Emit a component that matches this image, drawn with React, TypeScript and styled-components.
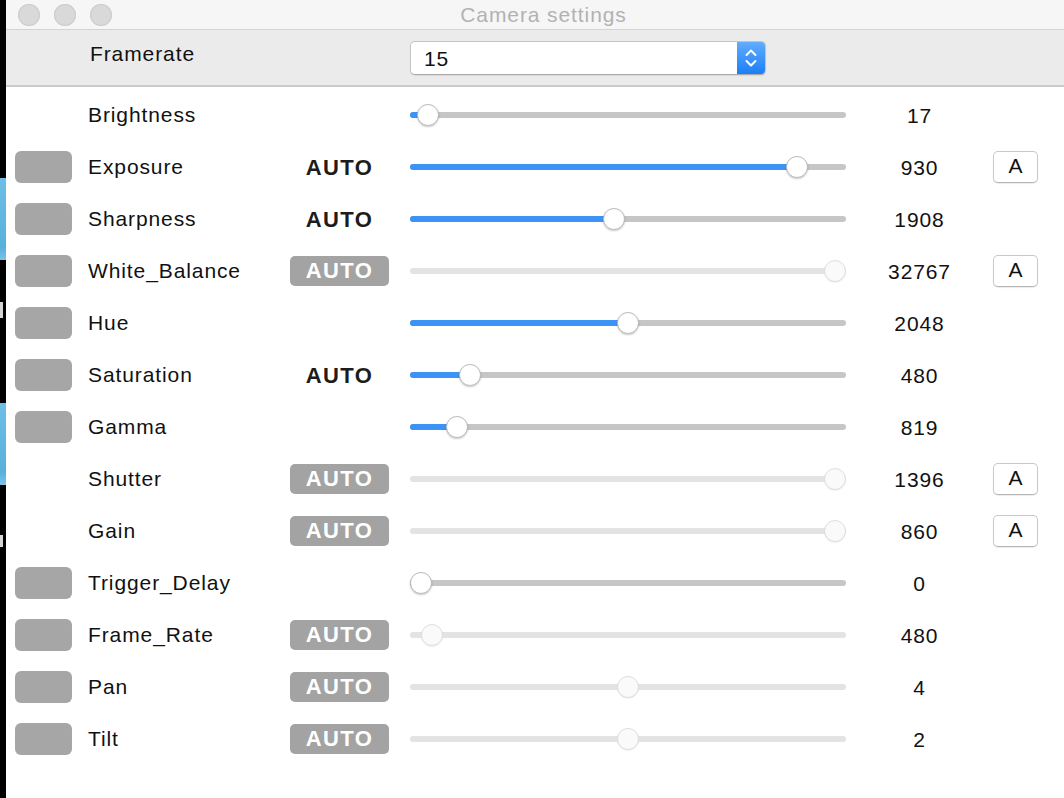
import React from 'react';
import styled, { createGlobalStyle } from 'styled-components';

const GlobalStyle = createGlobalStyle`
  html, body {
    margin: 0;
    padding: 0;
    background: #000;
  }
  body {
    font-family: 'Liberation Sans', Arial, sans-serif;
    -webkit-font-smoothing: antialiased;
  }
`;

type Control = {
  name: string;
  toggle: boolean;
  auto: 'none' | 'text' | 'badge';
  enabled: boolean;
  position: number;
  value: number;
  autoButton: boolean;
};

const controls: Control[] = [
  { name: 'Brightness', toggle: false, auto: 'none', enabled: true, position: 0.017, value: 17, autoButton: false },
  { name: 'Exposure', toggle: true, auto: 'text', enabled: true, position: 0.908, value: 930, autoButton: true },
  { name: 'Sharpness', toggle: true, auto: 'text', enabled: true, position: 0.466, value: 1908, autoButton: false },
  { name: 'White_Balance', toggle: true, auto: 'badge', enabled: false, position: 1, value: 32767, autoButton: true },
  { name: 'Hue', toggle: true, auto: 'none', enabled: true, position: 0.5, value: 2048, autoButton: false },
  { name: 'Saturation', toggle: true, auto: 'text', enabled: true, position: 0.118, value: 480, autoButton: false },
  { name: 'Gamma', toggle: true, auto: 'none', enabled: true, position: 0.087, value: 819, autoButton: false },
  { name: 'Shutter', toggle: false, auto: 'badge', enabled: false, position: 1, value: 1396, autoButton: true },
  { name: 'Gain', toggle: false, auto: 'badge', enabled: false, position: 1, value: 860, autoButton: true },
  { name: 'Trigger_Delay', toggle: true, auto: 'none', enabled: true, position: 0, value: 0, autoButton: false },
  { name: 'Frame_Rate', toggle: true, auto: 'badge', enabled: false, position: 0.027, value: 480, autoButton: false },
  { name: 'Pan', toggle: true, auto: 'badge', enabled: false, position: 0.5, value: 4, autoButton: false },
  { name: 'Tilt', toggle: true, auto: 'badge', enabled: false, position: 0.5, value: 2, autoButton: false }
];

const Screen = styled.div`
  display: flex;
  width: 1064px;
  height: 798px;
  overflow: hidden;
  background: #000;
`;

// sliver of the desktop showing left of the window
const Desktop = styled.div`
  width: 6px;
  flex-shrink: 0;
  display: flex;
  flex-direction: column;
  overflow: hidden;
  background: #000;
`;

const DesktopTile = styled.div<{ $top: number; $height: number }>`
  margin-top: ${({ $top }) => $top}px;
  height: ${({ $height }) => $height}px;
  background: linear-gradient(#6dbfe6, #58b0dc 85%, #7cc4e8);
`;

const DesktopMark = styled.div<{ $top: number; $height: number }>`
  margin-top: ${({ $top }) => $top}px;
  width: 3px;
  height: ${({ $height }) => $height}px;
  background: #d4d4d4;
`;

const Window = styled.div`
  flex: 1;
  display: flex;
  flex-direction: column;
  background: #fff;
`;

const TitleBar = styled.div`
  height: 29px;
  display: flex;
  align-items: center;
  padding-left: 12px;
  background: #f6f6f6;
  border-bottom: 1px solid #d4d4d4;
`;

const Lights = styled.div`
  display: flex;
  gap: 14px;
`;

const Light = styled.div`
  width: 22px;
  height: 22px;
  border-radius: 50%;
  background: #d9d9d9;
  box-shadow: inset 0 0 0 1px #cdcdcd;
`;

const Title = styled.div`
  flex: 1;
  padding-right: 89px;
  text-align: center;
  color: #b2b2b2;
  font-size: 21px;
  letter-spacing: 0.9px;
  line-height: 28px;
`;

const Toolbar = styled.div`
  height: 55px;
  display: flex;
  align-items: center;
  padding-left: 84px;
  background: #ebebeb;
  border-bottom: 2px solid #cbcbcb;
`;

const ToolbarLabel = styled.div`
  width: 320px;
  font-size: 21px;
  letter-spacing: 0.9px;
  color: #111;
  margin-top: -7px;
`;

const Select = styled.div`
  width: 356px;
  height: 34px;
  box-sizing: border-box;
  display: flex;
  align-items: stretch;
  background: #fff;
  border: 1px solid #c4c4c4;
  border-bottom-color: #a9a9a9;
  border-radius: 5px;
  box-shadow: 0 1px 1px rgba(0, 0, 0, 0.08);
  overflow: hidden;
`;

const SelectValue = styled.div`
  flex: 1;
  padding-left: 13px;
  font-size: 21px;
  letter-spacing: 0.9px;
  line-height: 34px;
  color: #111;
`;

const Stepper = styled.div`
  width: 28px;
  display: flex;
  align-items: center;
  justify-content: center;
  background: linear-gradient(#62acfb, #1b7ff8);
`;

const Rows = styled.div`
  padding-top: 2px;
  display: flex;
  flex-direction: column;
`;

const Row = styled.div`
  height: 52px;
  display: grid;
  grid-template-columns: 57px 218px 99px 457px 147px 45px;
  align-items: center;
  padding-left: 9px;
`;

const Toggle = styled.div<{ $visible: boolean }>`
  width: 57px;
  height: 32px;
  border-radius: 6px;
  background: ${({ $visible }) => ($visible ? '#a6a6a6' : 'transparent')};
`;

const Label = styled.div`
  padding-left: 16px;
  font-size: 21px;
  letter-spacing: 0.9px;
  color: #111;
  margin-top: -1px;
`;

const AutoText = styled.div`
  text-align: center;
  font-size: 22px;
  font-weight: 700;
  letter-spacing: 1.4px;
  color: #1c1c1c;
  margin-top: 1px;
`;

const AutoBadge = styled.div`
  height: 30px;
  border-radius: 5px;
  background: #a3a3a3;
  color: #fff;
  font-size: 22px;
  font-weight: 700;
  letter-spacing: 1.4px;
  line-height: 30px;
  text-align: center;
`;

const SliderWrap = styled.div`
  padding-left: 21px;
`;

const Track = styled.div<{ $enabled: boolean }>`
  position: relative;
  width: 436px;
  height: 6px;
  border-radius: 3px;
  background: ${({ $enabled }) => ($enabled ? '#c6c6c6' : '#e3e3e3')};
`;

const Fill = styled.div`
  position: absolute;
  left: 0;
  top: 0;
  height: 6px;
  border-radius: 3px;
  background: #3d93f5;
`;

const Thumb = styled.div<{ $enabled: boolean }>`
  position: absolute;
  top: -8px;
  width: 22px;
  height: 22px;
  box-sizing: border-box;
  border-radius: 50%;
  background: ${({ $enabled }) => ($enabled ? '#fff' : '#fafafa')};
  border: 1px solid ${({ $enabled }) => ($enabled ? '#bdbdbd' : '#dedede')};
  box-shadow: ${({ $enabled }) =>
    $enabled ? '0 1px 2px rgba(0, 0, 0, 0.22)' : '0 1px 1px rgba(0, 0, 0, 0.06)'};
`;

const Value = styled.div`
  text-align: center;
  font-size: 21px;
  letter-spacing: 0.9px;
  color: #111;
  margin-top: 1px;
`;

const AutoButton = styled.div`
  width: 45px;
  height: 32px;
  box-sizing: border-box;
  border: 1px solid #c9c9c9;
  border-bottom-color: #b5b5b5;
  border-radius: 5px;
  background: #fff;
  box-shadow: 0 1px 1px rgba(0, 0, 0, 0.08);
  font-size: 21px;
  line-height: 28px;
  text-align: center;
  color: #111;
`;

function Slider({ enabled, position }: { enabled: boolean; position: number }) {
  const travel = 436 - 22;
  const left = position * travel;
  return (
    <Track $enabled={enabled}>
      {enabled && <Fill style={{ width: left + 11 }} />}
      <Thumb $enabled={enabled} style={{ left }} />
    </Track>
  );
}

function ControlRow({ control }: { control: Control }) {
  return (
    <Row>
      <Toggle $visible={control.toggle} />
      <Label>{control.name}</Label>
      {control.auto === 'text' && <AutoText>AUTO</AutoText>}
      {control.auto === 'badge' && <AutoBadge>AUTO</AutoBadge>}
      {control.auto === 'none' && <div />}
      <SliderWrap>
        <Slider enabled={control.enabled} position={control.position} />
      </SliderWrap>
      <Value>{control.value}</Value>
      {control.autoButton ? <AutoButton>A</AutoButton> : <div />}
    </Row>
  );
}

export default function App() {
  return (
    <>
      <GlobalStyle />
      <Screen>
        <Desktop>
          <DesktopTile $top={178} $height={82} />
          <DesktopMark $top={42} $height={16} />
          <DesktopTile $top={85} $height={82} />
          <DesktopMark $top={50} $height={12} />
        </Desktop>
        <Window>
          <TitleBar>
            <Lights>
              <Light />
              <Light />
              <Light />
            </Lights>
            <Title>Camera settings</Title>
          </TitleBar>
          <Toolbar>
            <ToolbarLabel>Framerate</ToolbarLabel>
            <Select>
              <SelectValue>15</SelectValue>
              <Stepper>
                <svg width="14" height="22" viewBox="0 0 14 22" fill="none">
                  <path d="M2.5 8 L7 3.5 L11.5 8" stroke="#fff" strokeWidth="2" strokeLinecap="round" strokeLinejoin="round" />
                  <path d="M2.5 14 L7 18.5 L11.5 14" stroke="#fff" strokeWidth="2" strokeLinecap="round" strokeLinejoin="round" />
                </svg>
              </Stepper>
            </Select>
          </Toolbar>
          <Rows>
            {controls.map((c) => (
              <ControlRow key={c.name} control={c} />
            ))}
          </Rows>
        </Window>
      </Screen>
    </>
  );
}
